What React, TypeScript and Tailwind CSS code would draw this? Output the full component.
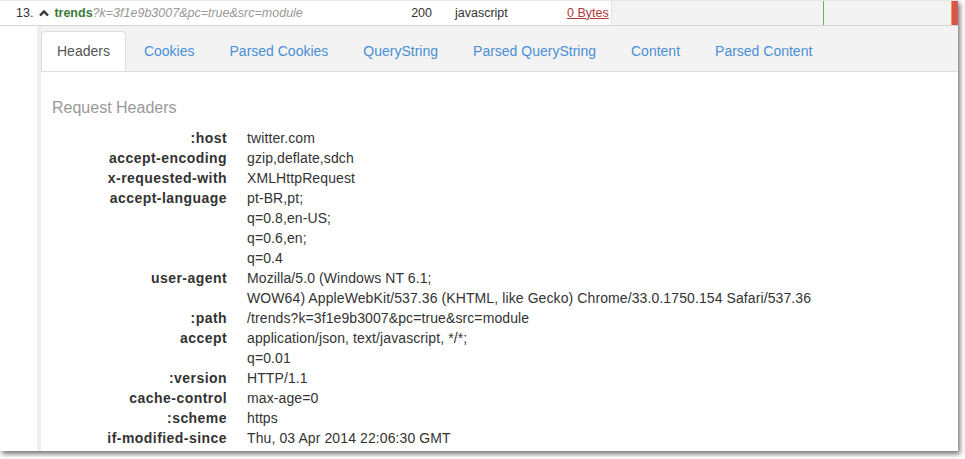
import React from 'react';

const tabs = [
  'Headers',
  'Cookies',
  'Parsed Cookies',
  'QueryString',
  'Parsed QueryString',
  'Content',
  'Parsed Content',
];

const headers: [string, string[]][] = [
  [':host', ['twitter.com']],
  ['accept-encoding', ['gzip,deflate,sdch']],
  ['x-requested-with', ['XMLHttpRequest']],
  ['accept-language', ['pt-BR,pt;', 'q=0.8,en-US;', 'q=0.6,en;', 'q=0.4']],
  [
    'user-agent',
    [
      'Mozilla/5.0 (Windows NT 6.1;',
      'WOW64) AppleWebKit/537.36 (KHTML, like Gecko) Chrome/33.0.1750.154 Safari/537.36',
    ],
  ],
  [':path', ['/trends?k=3f1e9b3007&pc=true&src=module']],
  ['accept', ['application/json, text/javascript, */*;', 'q=0.01']],
  [':version', ['HTTP/1.1']],
  ['cache-control', ['max-age=0']],
  [':scheme', ['https']],
  ['if-modified-since', ['Thu, 03 Apr 2014 22:06:30 GMT']],
  ['referer', ['https://twitter.com/']],
];

export default function App() {
  return (
    <div className="w-[965px] h-[459px] bg-white overflow-hidden font-['Liberation_Sans',Arial,sans-serif]">
      <div className="w-[958px] h-[451px] bg-white overflow-hidden shadow-[2px_3px_5px_rgba(0,0,0,0.55)] relative">
        {/* Request row */}
        <div className="flex h-[26px] border-t border-[#e6e6e6] border-b border-b-[#d5d5d5] text-[12.5px] text-[#333]">
          <div className="flex items-center pl-[16px] w-[400px]">
            <span>13.</span>
            <svg className="ml-[6px] mr-[5px]" width="10" height="8" viewBox="0 0 10 8">
              <path d="M1 6.5 L5 2.5 L9 6.5" stroke="#333" strokeWidth="2.4" fill="none" />
            </svg>
            <span className="font-bold text-[#3c7a3c]">trends</span>
            <span className="italic text-[#999]">?k=3f1e9b3007&amp;pc=true&amp;src=module</span>
          </div>
          <div className="flex items-center w-[32px] justify-end">200</div>
          <div className="flex items-center pl-[23px] w-[135px]">javascript</div>
          <div className="flex items-center w-[44px]">
            <span className="text-[#b0383c] underline">0 Bytes</span>
          </div>
          <div className="flex-1 bg-[#f3f3f3] border-l border-[#e4e4e4] flex">
            <div className="w-[211px]" />
            <div className="w-px bg-[#5cb85c]" />
            <div className="flex-1" />
            <div className="w-[7px] bg-[#d9534f] border-l border-[#e8a040]" />
          </div>
        </div>

        {/* Detail panel */}
        <div className="ml-[37px] border-l-[4px] border-[#eeeeee] h-full">
          <div className="bg-[#f3f3f3] pt-[5px] pl-0 border-b border-[#dddddd] flex text-[14px]">
            {tabs.map((t, i) => (
              <div
                key={t}
                className={
                  i === 0
                    ? 'px-[15px] h-[40px] leading-[38px] mr-[2px] -mb-px bg-white border border-[#dddddd] border-b-white rounded-t-[4px] text-[#555]'
                    : 'px-[15px] h-[40px] leading-[38px] mr-[3px] border border-transparent text-[#4a8fd6]'
                }
              >
                {t}
              </div>
            ))}
          </div>

          <div className="pl-[11px] pt-[25px]">
            <div className="text-[16px] text-[#999] leading-[22px] mb-[9px]">Request Headers</div>
            <div className="text-[14px] leading-[20px] text-[#333]">
              {headers.map(([k, vals]) => (
                <div key={k} className="flex">
                  <div className="w-[175px] text-right font-bold tracking-[0.45px] shrink-0">{k}</div>
                  <div className="pl-[20px] tracking-[0.1px]">
                    {vals.map((v) => (
                      <div key={v}>{v}</div>
                    ))}
                  </div>
                </div>
              ))}
            </div>
          </div>
        </div>
      </div>
    </div>
  );
}
